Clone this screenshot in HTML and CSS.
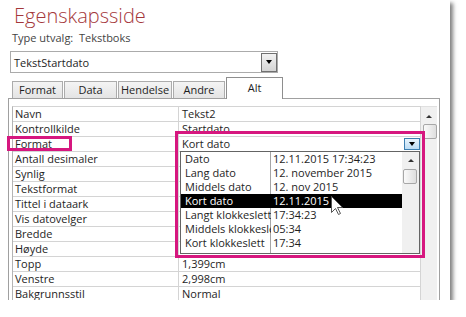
FILE: index.html
```html
<!DOCTYPE html>
<html lang="no">
<head>
    <meta charset="UTF-8">
    <title>Egenskapsside</title>
    <link rel="stylesheet" href="styles.css">
</head>
<body>
    <div class="window">
        <h1 class="title">Egenskapsside</h1>
        <div class="selection-type">Type utvalg:&nbsp; Tekstboks</div>

        <div class="combo">
            <span class="combo-text">TekstStartdato</span>
            <span class="combo-btn"><span class="arrow"></span></span>
        </div>

        <div class="tabs">
            <div class="tab tab-format">Format</div>
            <div class="tab tab-data">Data</div>
            <div class="tab tab-event">Hendelse</div>
            <div class="tab tab-other">Andre</div>
            <div class="tab tab-all active">Alt</div>
        </div>

        <div class="panel">
            <div class="sheet">
                <div class="grid">
                    <div class="row"><div class="label">Navn</div><div class="value">Tekst2</div></div>
                    <div class="row"><div class="label">Kontrollkilde</div><div class="value">Startdato</div></div>
                    <div class="row"><div class="label">Format</div><div class="value value-open"><span>Kort dato</span><span class="drop-btn"><span class="arrow"></span></span></div></div>
                    <div class="row"><div class="label">Antall desimaler</div><div class="value"></div></div>
                    <div class="row"><div class="label">Synlig</div><div class="value"></div></div>
                    <div class="row"><div class="label">Tekstformat</div><div class="value"></div></div>
                    <div class="row"><div class="label">Tittel i dataark</div><div class="value"></div></div>
                    <div class="row"><div class="label">Vis datovelger</div><div class="value"></div></div>
                    <div class="row"><div class="label">Bredde</div><div class="value"></div></div>
                    <div class="row"><div class="label">Høyde</div><div class="value"></div></div>
                    <div class="row"><div class="label">Topp</div><div class="value">1,399cm</div></div>
                    <div class="row"><div class="label">Venstre</div><div class="value">2,998cm</div></div>
                    <div class="row"><div class="label">Bakgrunnsstil</div><div class="value">Normal</div></div>

                    <div class="dropdown">
                        <div class="options">
                            <div class="option"><span class="opt-name">Dato</span><span class="opt-sample">12.11.2015 17:34:23</span></div>
                            <div class="option"><span class="opt-name">Lang dato</span><span class="opt-sample">12. november 2015</span></div>
                            <div class="option"><span class="opt-name">Middels dato</span><span class="opt-sample">12. nov 2015</span></div>
                            <div class="option selected"><span class="opt-name">Kort dato</span><span class="opt-sample">12.11.2015</span></div>
                            <div class="option"><span class="opt-name">Langt klokkeslett</span><span class="opt-sample">17:34:23</span></div>
                            <div class="option"><span class="opt-name">Middels klokkeslett</span><span class="opt-sample">05:34</span></div>
                            <div class="option"><span class="opt-name">Kort klokkeslett</span><span class="opt-sample">17:34</span></div>
                        </div>
                        <div class="scrollbar scrollbar-small">
                            <span class="up"></span>
                            <span class="thumb"></span>
                        </div>
                    </div>
                </div>
                <div class="scrollbar scrollbar-main">
                    <span class="up"></span>
                    <span class="thumb"></span>
                </div>
            </div>
        </div>

        <div class="mark mark-label"></div>
        <div class="mark mark-list"></div>

        <svg class="cursor" width="13" height="20" viewBox="0 0 13 20">
            <path d="M0.5 0.5 V16.5 L4.5 12.5 L7.5 18.5 L9.5 17.5 L6.5 11.5 H11.5 Z" fill="#fff" stroke="#555" stroke-width="1"/>
        </svg>
    </div>
</body>
</html>
```

FILE: styles.css
```css
body {
    margin: 0;
    background: #fff;
    font-family: "Open Sans", "Noto Sans", sans-serif;
    font-size: 11px;
    color: #1e1e1e;
}
.window {
    position: relative;
    width: 450px;
    height: 300px;
    background: #fff;
    box-shadow: 3px 3px 4px rgba(0, 0, 0, 0.5);
    overflow: visible;
}
.title {
    margin: 0;
    padding: 4px 0 0 14px;
    font-size: 20px;
    line-height: 24px;
    font-weight: 300;
    color: #a4373a;
}
.selection-type {
    margin-top: 2px;
    padding-left: 12px;
    line-height: 15px;
    color: #444;
}
.combo {
    display: flex;
    align-items: center;
    justify-content: space-between;
    box-sizing: border-box;
    margin: 6px 0 0 10px;
    width: 268px;
    height: 22px;
    border: 1px solid #ababab;
    padding-left: 3px;
}
.combo-btn {
    display: flex;
    align-items: center;
    justify-content: center;
    box-sizing: border-box;
    width: 16px;
    height: 19px;
    margin-right: 0;
    border: 1px solid #707070;
    background: linear-gradient(#f2f2f2, #d4d4d4);
}
.arrow {
    width: 0;
    height: 0;
    border-left: 3.5px solid transparent;
    border-right: 3.5px solid transparent;
    border-top: 4px solid #000;
}
.tabs {
    display: flex;
    align-items: flex-end;
    height: 21px;
    margin-top: 4px;
    padding-left: 12px;
    position: relative;
    z-index: 1;
}
.tab {
    box-sizing: border-box;
    height: 17px;
    border: 1px solid #acacac;
    border-bottom: none;
    margin-right: 1px;
    background: linear-gradient(#f4f4f4, #e4e4e4);
    text-align: center;
    line-height: 16px;
}
.tab-format { width: 51px; }
.tab-data { width: 53px; }
.tab-event { width: 54px; }
.tab-other { width: 52px; }
.tab-all { width: 57px; }
.tab.active {
    height: 22px;
    margin-bottom: -1px;
    background: #fff;
    border-color: #8e8e8e;
    line-height: 19px;
}
.panel {
    box-sizing: border-box;
    margin-left: 8px;
    width: 432px;
    height: 203px;
    border: 1px solid #a0a0a0;
    padding: 7px 2px 0 3px;
    overflow: hidden;
}
.sheet {
    display: flex;
    height: 100%;
}
.grid {
    position: relative;
    width: 409px;
    box-sizing: border-box;
    border-left: 1px solid #b4b4b4;
    border-top: 1px solid #d4d4d4;
    border-right: 1px solid #d4d4d4;
}
.row {
    display: grid;
    grid-template-columns: 166px 1fr;
    height: 15px;
    box-sizing: border-box;
    border-bottom: 1px solid #d4d4d4;
    line-height: 14px;
}
.label {
    padding-left: 2px;
    border-right: 1px solid #d4d4d4;
    white-space: nowrap;
}
.value {
    padding-left: 3px;
    white-space: nowrap;
}
.value-open {
    display: flex;
    justify-content: space-between;
    align-items: center;
}
.drop-btn {
    display: flex;
    align-items: center;
    justify-content: center;
    box-sizing: border-box;
    width: 16px;
    height: 12px;
    border: 1px solid #3c7fb1;
    background: linear-gradient(#e8f4fc, #bcdcf4);
}
.dropdown {
    position: absolute;
    left: 167px;
    top: 44px;
    width: 240px;
    height: 103px;
    box-sizing: border-box;
    border: 1px solid #646464;
    background: #fff;
    display: flex;
}
.options {
    flex: 1;
    background: linear-gradient(#a5a5a5, #a5a5a5) 89px 0 / 1px 100% no-repeat;
}
.option {
    display: grid;
    grid-template-columns: 90px 1fr;
    height: 14px;
    line-height: 14px;
    white-space: nowrap;
}
.opt-name {
    padding-left: 4px;
    overflow: hidden;
}
.opt-sample {
    padding-left: 2px;
    overflow: hidden;
}
.option.selected {
    background: #000;
    color: #fff;
}
.scrollbar {
    position: relative;
    box-sizing: border-box;
    background: #f0f0f0;
}
.scrollbar-main {
    width: 16px;
    border-top: 1px solid #e0e0e0;
}
.scrollbar-small {
    width: 17px;
}
.up {
    position: absolute;
    left: 50%;
    margin-left: -3px;
    width: 0;
    height: 0;
    border-left: 3px solid transparent;
    border-right: 3px solid transparent;
    border-bottom: 3px solid #333;
}
.scrollbar-main .up { top: 8px; }
.scrollbar-small .up { top: 7px; }
.thumb {
    position: absolute;
    box-sizing: border-box;
    width: 14px;
    height: 15px;
    border: 1px solid #a7a7a7;
    border-radius: 2px;
    background: linear-gradient(90deg, #fafafa, #dedede);
}
.scrollbar-main .thumb { left: 2px; top: 17px; }
.scrollbar-small .thumb { left: 1px; top: 17px; }
.mark {
    position: absolute;
    box-sizing: border-box;
    border: 3px solid #d6177f;
}
.mark-label {
    left: 7px;
    top: 136px;
    width: 65px;
    height: 15px;
}
.mark-list {
    left: 175px;
    top: 131px;
    width: 250px;
    height: 127px;
}
.cursor {
    position: absolute;
    left: 331px;
    top: 196px;
}
```
